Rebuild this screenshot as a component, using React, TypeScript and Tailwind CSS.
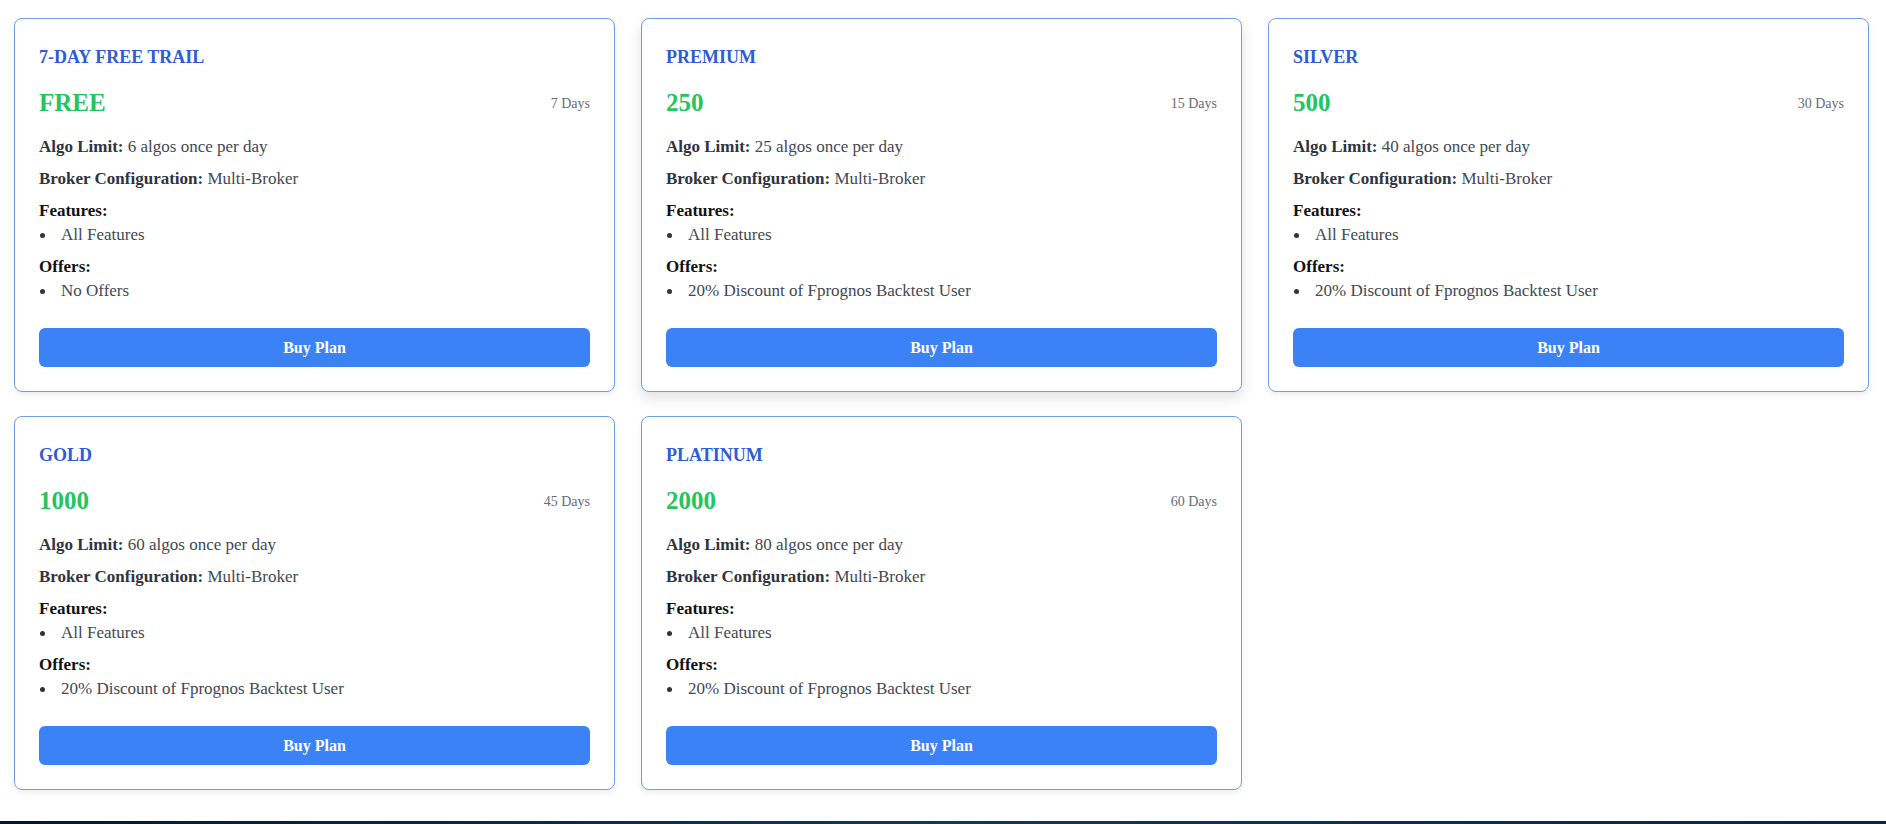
const plans = [
  { name: "7-DAY FREE TRAIL", price: "FREE", days: "7 Days", algos: 6, offer: "No Offers" },
  { name: "PREMIUM", price: "250", days: "15 Days", algos: 25, offer: "20% Discount of Fprognos Backtest User" },
  { name: "SILVER", price: "500", days: "30 Days", algos: 40, offer: "20% Discount of Fprognos Backtest User" },
  { name: "GOLD", price: "1000", days: "45 Days", algos: 60, offer: "20% Discount of Fprognos Backtest User" },
  { name: "PLATINUM", price: "2000", days: "60 Days", algos: 80, offer: "20% Discount of Fprognos Backtest User" },
];

function Bullet({ children }: { children: React.ReactNode }) {
  return (
    <li className="flex h-6 items-center text-[#424854]">
      <span className="w-[22px] pl-[1px]">
        <span className="block h-[5px] w-[5px] rounded-full bg-[#333]"></span>
      </span>
      <span>{children}</span>
    </li>
  );
}

function PlanCard({ plan, raised }: { plan: (typeof plans)[number]; raised?: boolean }) {
  return (
    <div
      className={`rounded-lg border border-[#6d9fe3] bg-white p-6 ${
        raised ? "shadow-[0_6px_14px_rgba(0,0,0,0.12)]" : "shadow-[0_3px_6px_rgba(0,0,0,0.07)]"
      }`}
    >
      <h2 className="mb-4 text-[18px] leading-7 font-bold text-[#2e5bd6]">{plan.name}</h2>

      <div className="mb-4 flex items-center justify-between">
        <span className="text-[25px] leading-8 font-bold text-[#22c55e]">{plan.price}</span>
        <span className="text-[14px] text-[#666c75]">{plan.days}</span>
      </div>

      <p className="mb-2 leading-6 text-[#424854]">
        <span className="font-bold text-[#2f3440]">Algo Limit:</span> {plan.algos} algos once per day
      </p>
      <p className="mb-2 leading-6 text-[#424854]">
        <span className="font-bold text-[#2f3440]">Broker Configuration:</span> Multi-Broker
      </p>

      <div className="mb-2">
        <h3 className="leading-6 font-bold text-[#111]">Features:</h3>
        <ul>
          <Bullet>All Features</Bullet>
        </ul>
      </div>

      <div>
        <h3 className="leading-6 font-bold text-[#111]">Offers:</h3>
        <ul>
          <Bullet>{plan.offer}</Bullet>
        </ul>
      </div>

      <button className="mt-[25px] h-[39px] w-full rounded-md bg-[#3b82f6] text-[16px] font-bold text-white">
        Buy Plan
      </button>
    </div>
  );
}

export default function App() {
  return (
    <div className="min-h-screen bg-white text-[17px]" style={{ fontFamily: '"Liberation Serif", "Times New Roman", serif' }}>
      <div className="grid grid-cols-3 gap-x-[26px] gap-y-6 pt-[18px] pr-[17px] pl-[14px]">
        {plans.map((plan, i) => (
          <PlanCard key={plan.name} plan={plan} raised={i === 1} />
        ))}
      </div>

      {/* Footer */}
      <div className="mt-[31px] h-[3px] bg-gradient-to-r from-[#07162e] via-[#0c3a63] to-[#082447]"></div>
    </div>
  );
}
